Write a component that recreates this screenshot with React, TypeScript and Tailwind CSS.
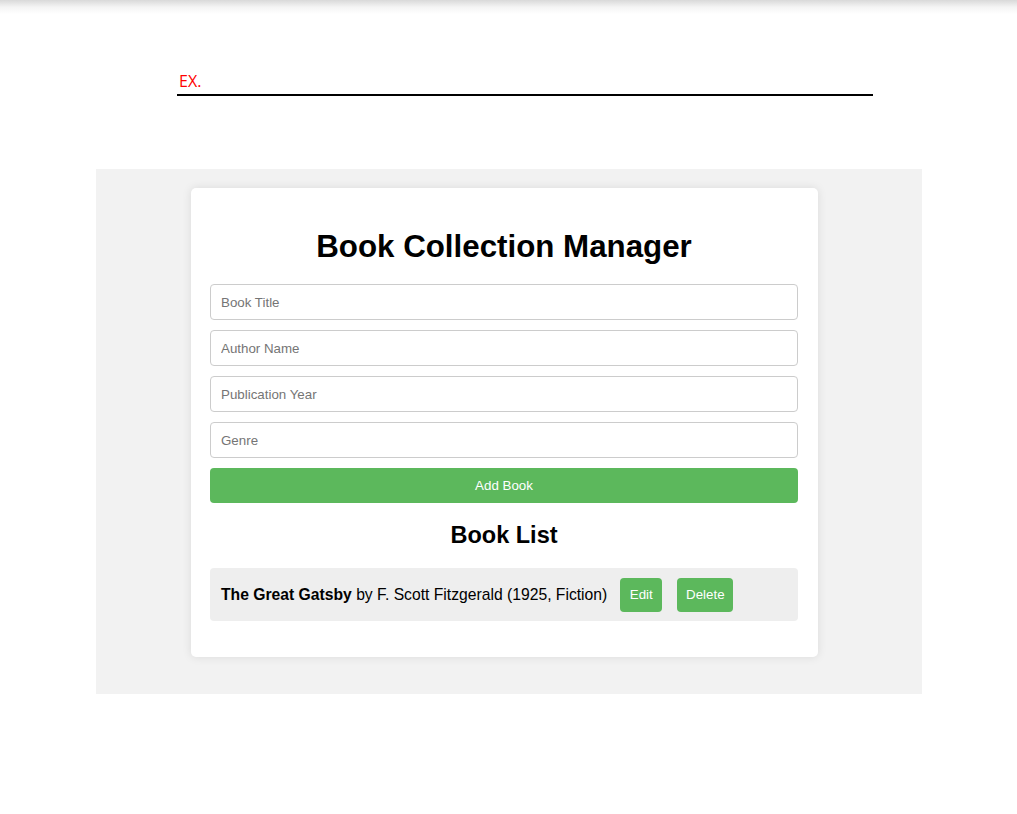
import { useState } from "react";

type Book = { title: string; author: string; year: string; genre: string };

export default function App() {
  const [books] = useState<Book[]>([
    { title: "The Great Gatsby", author: "F. Scott Fitzgerald", year: "1925", genre: "Fiction" },
  ]);

  const fields = ["Book Title", "Author Name", "Publication Year", "Genre"];

  return (
    <div className="relative min-h-[814px] w-[1017px] bg-white font-['Liberation_Sans',Arial,sans-serif]">
      {/* top shadow from the page chrome */}
      <div className="absolute left-0 right-0 top-0 h-[14px] bg-gradient-to-b from-[#d9d9d9] via-[#f4f4f4] to-white" />

      <div className="pt-[70px] pl-[177px] w-[873px]">
        <div className="border-b-2 border-black pb-[2px] pl-[2px] font-['Open_Sans',sans-serif] text-[16px] leading-[22px] text-[#ff0000]">
          EX.
        </div>
      </div>

      <div className="mt-[73px] ml-[96px] w-[826px] h-[525px] bg-[#f2f2f2] pt-[19px]">
        <div className="ml-[95px] w-[627px] rounded-[5px] bg-white pt-5 pb-5 pl-[19px] pr-5 shadow-[0_0_10px_rgba(0,0,0,0.1)]">
          <h1 className="mt-5 mb-[19px] text-center text-[31.3px] font-bold leading-[37px] text-black">
            Book Collection Manager
          </h1>

          <div className="flex flex-col gap-[10px]">
            {fields.map((f) => (
              <input
                key={f}
                placeholder={f}
                className="h-[36px] w-full rounded-[4px] border border-[#cccccc] px-[10px] text-[13.33px] text-black placeholder:text-[#757575] outline-none"
              />
            ))}
            <button className="h-[35px] w-full rounded-[4px] bg-[#5cb85c] text-[13.33px] text-white">
              Add Book
            </button>
          </div>

          <h2 className="mt-[18px] mb-[19px] text-center text-[23.5px] font-bold leading-[28px] text-black">
            Book List
          </h2>

          <ul className="mb-4">
            {books.map((b) => (
              <li key={b.title} className="flex h-[53px] items-center rounded-[4px] bg-[#eeeeee] px-[11px] text-[15.7px] text-black">
                <span>
                  <strong>{b.title}</strong> by {b.author} ({b.year}, {b.genre})
                </span>
                <button className="ml-[13px] h-[34px] w-[42px] rounded-[4px] bg-[#5cb85c] text-[13.33px] text-white">
                  Edit
                </button>
                <button className="ml-[15px] h-[34px] w-[56px] rounded-[4px] bg-[#5cb85c] text-[13.33px] text-white">
                  Delete
                </button>
              </li>
            ))}
          </ul>
        </div>
      </div>
    </div>
  );
}
